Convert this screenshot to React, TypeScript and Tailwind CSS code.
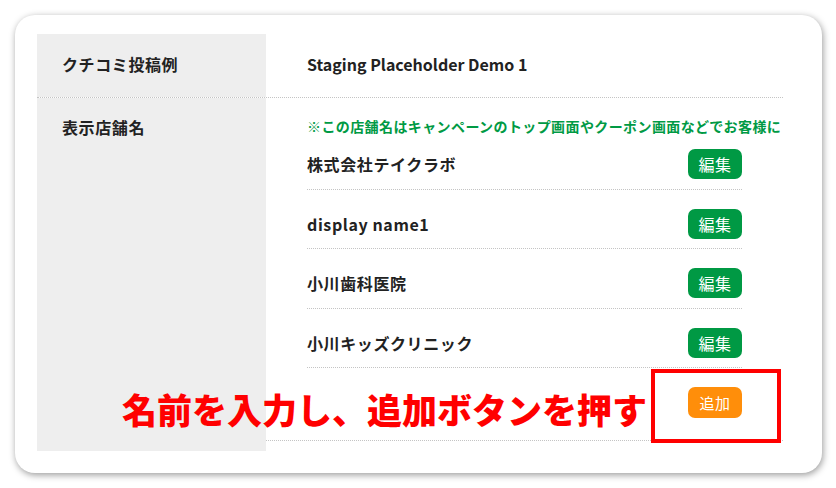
const names = ["株式会社テイクラボ", "display name1", "小川歯科医院", "小川キッズクリニック"];

export default function App() {
  return (
    <div className="relative w-[836px] h-[488px] bg-white" style={{ fontFamily: '"Noto Sans CJK JP", "Noto Sans", sans-serif' }}>
      <div className="absolute left-[15px] top-[15px] w-[807px] h-[458px] rounded-[20px] bg-white shadow-[1px_2px_7px_rgba(0,0,0,0.4)] pt-[19px] pl-[22px]">
        <div className="w-[746px] overflow-hidden">
          {/* row 1 */}
          <div className="flex h-[64px] border-b border-dotted border-[#c4c4c4]">
            <div className="w-[229px] shrink-0 bg-[#eeeeee] pl-[25px] pb-[4px] flex items-center text-[16px] font-bold tracking-[0.6px] text-[#222]">
              クチコミ投稿例
            </div>
            <div className="flex-1 pl-[41px] pb-[4px] flex items-center text-[16px] font-bold text-[#222]">
              Staging Placeholder Demo 1
            </div>
          </div>
          {/* row 2 */}
          <div className="flex">
            <div className="w-[229px] shrink-0 bg-[#eeeeee] pl-[25px] pt-[18px] text-[16px] leading-[22px] font-bold tracking-[0.6px] text-[#222]">
              表示店舗名
            </div>
            <div className="flex-1 pb-[10px] min-w-0">
              <div className="border-b border-dotted border-[#c4c4c4]">
                <div className="pl-[41px] pr-[41px] pt-[21px]">
                  <div className="whitespace-nowrap text-[14px] leading-[14px] font-bold tracking-[0.4px] text-[#009a44]">
                    ※この店舗名はキャンペーンのトップ画面やクーポン画面などでお客様に
                  </div>
                  {names.map((n, i) => (
                    <div
                      key={n}
                      className={`flex items-center justify-between border-b border-dotted border-[#c4c4c4] pb-[9.5px] ${i === 0 ? "pt-[16px]" : "pt-[19px]"}`}
                    >
                      <span className="text-[16px] font-bold tracking-[0.6px] text-[#222]">{n}</span>
                      <button className="w-[54px] h-[30px] rounded-[7px] bg-[#009944] text-white text-[16px] leading-none tracking-[0.5px]">
                        編集
                      </button>
                    </div>
                  ))}
                  <div className="flex justify-end pt-[19px] pb-[22px]">
                    <button className="w-[54px] h-[31px] rounded-[7px] bg-[#ff8e0a] text-white text-[15px] leading-none tracking-[0.5px]">
                      追加
                    </button>
                  </div>
                </div>
              </div>
            </div>
          </div>
        </div>
      </div>
      {/* annotation */}
      <div className="absolute left-[122px] top-[391px] text-[35px] leading-none font-black text-[#ff0000] whitespace-nowrap">
        名前を入力し、追加ボタンを押す
      </div>
      <div className="absolute left-[651px] top-[369px] w-[130px] h-[74px] border-[4px] border-[#ff0000]" />
    </div>
  );
}
